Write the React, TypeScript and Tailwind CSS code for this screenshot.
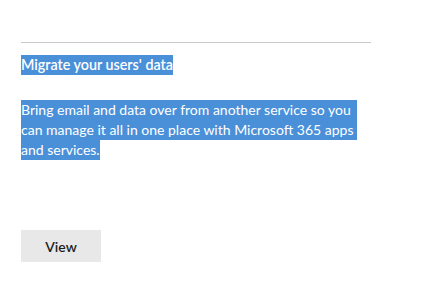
export default function App() {
  const font = { fontFamily: 'Lato, "Noto Sans", sans-serif' };
  return (
    <div className="w-[433px] h-[304px] bg-white" style={font}>
      <div className="pl-[21px] pt-[42px]">
        <div className="w-[350px] h-px bg-[#c8c8c8]" />
        <div className="mt-[12px]">
          <div className="w-fit bg-[#4a90d9] text-white text-[14.3px] leading-[20px] font-semibold">
            Migrate your users' data
          </div>
        </div>
        <div className="mt-[25px] w-[336px] text-white text-[14px] leading-[20px]">
          <div className="bg-[#4a90d9] whitespace-nowrap">Bring email and data over from another service so you</div>
          <div className="bg-[#4a90d9] whitespace-nowrap">can manage it all in one place with Microsoft 365 apps</div>
          <div className="w-fit bg-[#4a90d9] whitespace-nowrap">and services.</div>
        </div>
        <button className="mt-[70px] w-[80px] h-[32px] bg-[#e8e8e8] text-[#201f1e] text-[14px] font-semibold flex items-center justify-center">
          View
        </button>
      </div>
    </div>
  );
}
